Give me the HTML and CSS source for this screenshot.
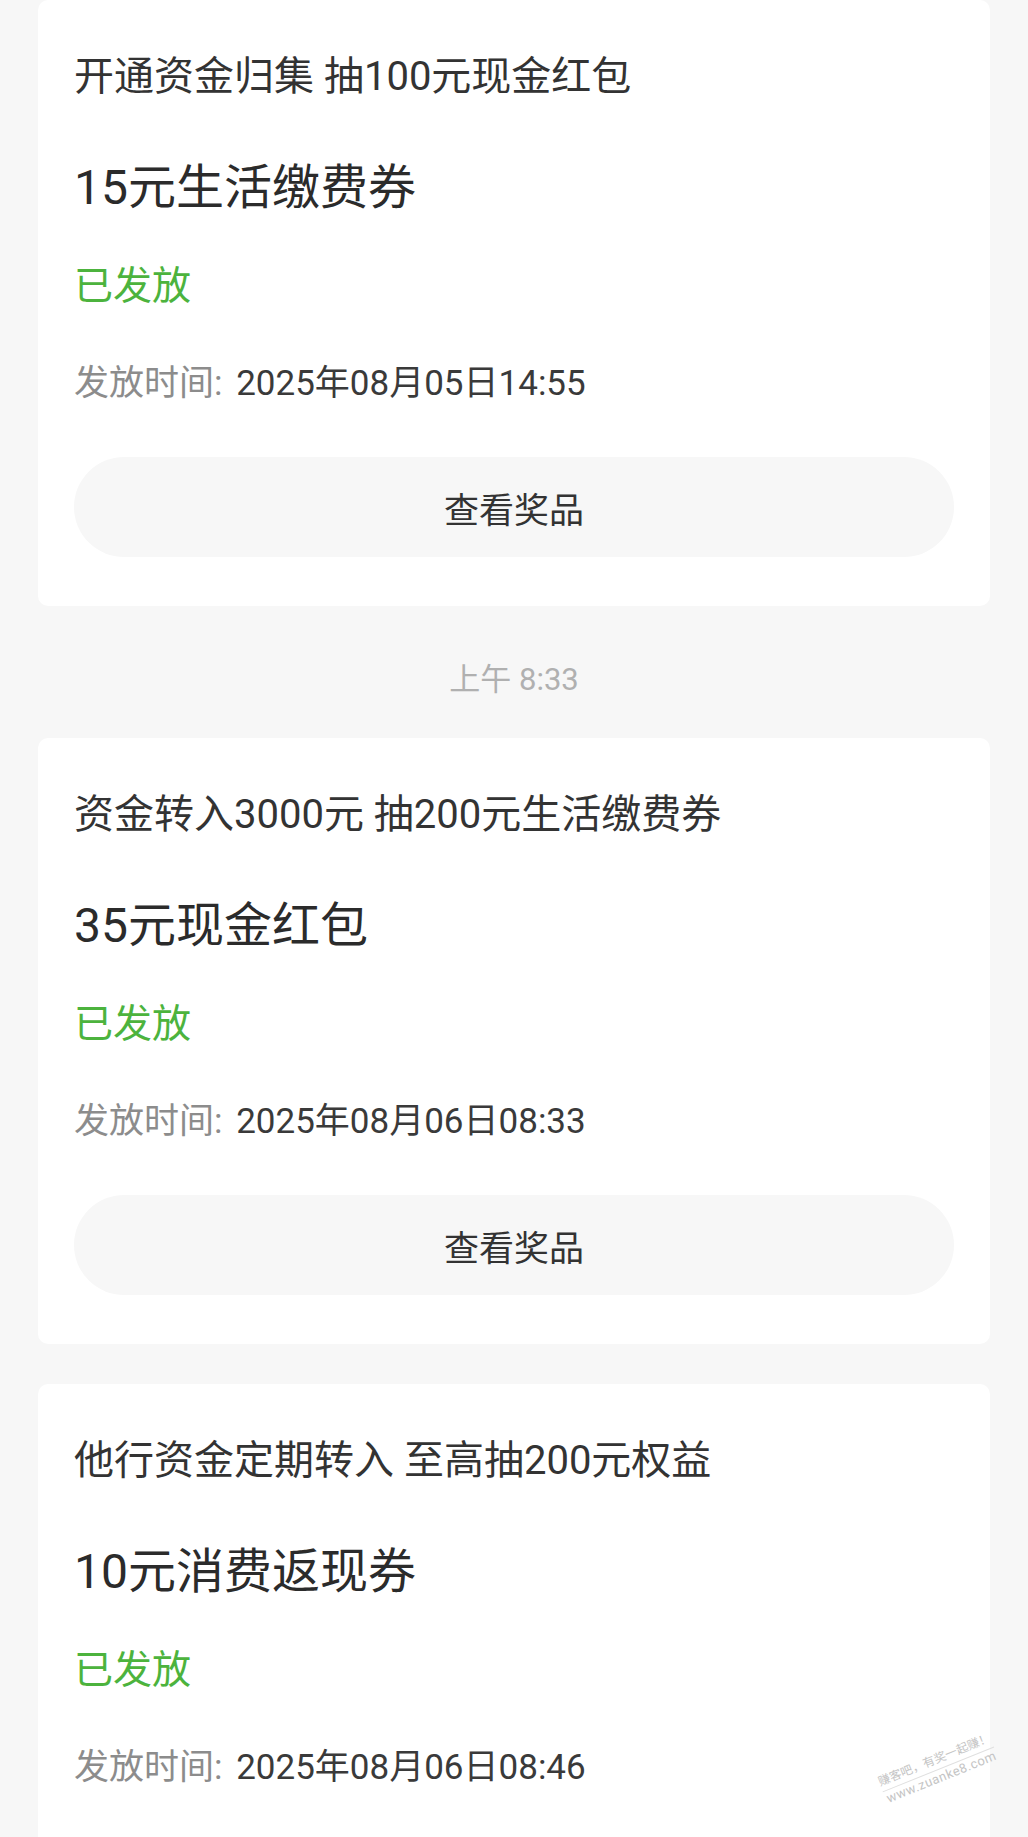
FILE: index.html
```html
<!DOCTYPE html>
<html lang="zh-CN">
<head>
    <meta charset="UTF-8">
    <title>奖品记录</title>
    <meta name="viewport" content="width=device-width, initial-scale=1">
    <link rel="stylesheet" href="styles.css">
</head>
<body>
    <main class="feed">
        <section class="card">
            <h2 class="card-title">开通资金归集 抽100元现金红包</h2>
            <p class="prize">15元生活缴费券</p>
            <p class="status">已发放</p>
            <p class="issued"><span class="label">发放时间: </span>2025年08月05日14:55</p>
            <button class="view-btn">查看奖品</button>
        </section>

        <div class="time">上午 8:33</div>

        <section class="card">
            <h2 class="card-title">资金转入3000元 抽200元生活缴费券</h2>
            <p class="prize">35元现金红包</p>
            <p class="status">已发放</p>
            <p class="issued"><span class="label">发放时间: </span>2025年08月06日08:33</p>
            <button class="view-btn">查看奖品</button>
        </section>

        <section class="card card-last">
            <h2 class="card-title">他行资金定期转入 至高抽200元权益</h2>
            <p class="prize">10元消费返现券</p>
            <p class="status">已发放</p>
            <p class="issued"><span class="label">发放时间: </span>2025年08月06日08:46</p>
        </section>
    </main>

    <div class="watermark">
        <span class="wm-name">赚客吧，有奖一起赚！</span>
        <span class="wm-url">www.zuanke8.com</span>
    </div>
</body>
</html>
```

FILE: styles.css
```css
body {
    margin: 0;
    padding: 0;
    background: #f7f7f7;
    font-family: Roboto, "Noto Sans CJK SC", sans-serif;
    color: #333;
    position: relative;
    overflow: hidden;
    height: 1837px;
}

.feed {
    padding: 0 38px;
}

.card {
    background: #fff;
    border-radius: 10px;
    padding: 50px 36px 49px;
}

.card + .card {
    margin-top: 40px;
}

/* last card runs on past the bottom of the screen */
.card-last {
    padding-bottom: 146px;
}

.card-title {
    margin: 0;
    font-size: 40px;
    font-weight: normal;
    line-height: 54px;
    color: #333;
}

.prize {
    margin: 52px 0 0;
    font-size: 48px;
    line-height: 64px;
    color: #2b2b2b;
}

.status {
    margin: 39px 0 0;
    font-size: 39px;
    line-height: 54px;
    color: #4cb33d;
}

.issued {
    margin: 44px 0 0;
    font-size: 35px;
    line-height: 54px;
    color: #3a3a3a;
}

.issued .label {
    color: #8c8c8c;
    padding-right: 5px;
}

.view-btn {
    display: block;
    width: 100%;
    height: 100px;
    margin-top: 46px;
    border: none;
    border-radius: 50px;
    background: #f7f7f7;
    font-family: inherit;
    font-size: 35px;
    color: #333;
    cursor: pointer;
}

.time {
    padding: 54px 0 38px;
    font-size: 31px;
    line-height: 40px;
    text-align: center;
    color: #b0b0b0;
}

.watermark {
    position: absolute;
    left: 878px;
    top: 1752px;
    display: flex;
    flex-direction: column;
    align-items: center;
    transform: rotate(-22deg);
    color: #c4c4c4;
    line-height: 15px;
}

.wm-name {
    font-size: 12px;
    border-bottom: 1px solid #e0e0e0;
    padding-bottom: 2px;
}

.wm-url {
    font-size: 13px;
    letter-spacing: 0.5px;
}
```
